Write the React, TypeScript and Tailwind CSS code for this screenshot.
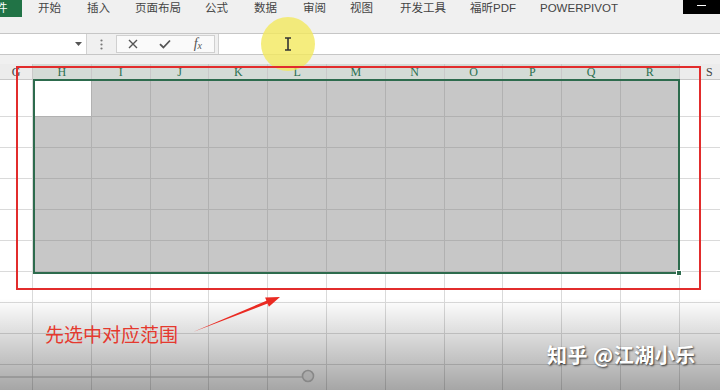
import { type ReactNode } from 'react'

const tabs = [
  { label: '开始', w: 'w-[49px]' },
  { label: '插入', w: 'w-[48px]' },
  { label: '页面布局', w: 'w-[70px]' },
  { label: '公式', w: 'w-[49px]' },
  { label: '数据', w: 'w-[49px]' },
  { label: '审阅', w: 'w-[47px]' },
  { label: '视图', w: 'w-[50px]' },
  { label: '开发工具', w: 'w-[70px]' },
  { label: '福昕PDF', w: 'w-[70px]' },
  { label: 'POWERPIVOT', w: 'w-[90px]' },
]

const cols = ['G', 'H', 'I', 'J', 'K', 'L', 'M', 'N', 'O', 'P', 'Q', 'R', 'S']
const rowCount = 10

function Ribbon() {
  return (
    <div className="h-[33px] bg-[#f0f0f0]">
      <div className="flex h-[17px] items-center">
        <div className="h-[17px] w-[22px] overflow-hidden bg-[#217346] text-[11.5px] leading-[17px] text-white">
          <span className="-ml-[4px]">件</span>
        </div>
        <div className="ml-[16px] flex text-[11.5px] leading-none text-[#444]">
          {tabs.map((t) => (
            <span key={t.label} className={`${t.w} shrink-0 whitespace-nowrap`}>
              {t.label}
            </span>
          ))}
        </div>
        <div className="ml-auto flex h-[14px] w-[37px] items-start self-start justify-center bg-black pt-[5px]">
          <div className="h-px w-[9px] bg-white" />
        </div>
      </div>
    </div>
  )
}

function FormulaBar() {
  return (
    <div className="flex h-[22px] border-y border-[#c6c6c6] bg-[#f0f0f0]">
      <div className="relative w-[87px] border-r border-[#d2d2d2] bg-white">
        <svg className="absolute left-[75px] top-[8px]" width="7" height="4" viewBox="0 0 7 4">
          <path d="M0 0h7L3.5 4z" fill="#555" />
        </svg>
      </div>
      <div className="flex w-[29px] items-center justify-center">
        <svg width="3" height="11" viewBox="0 0 3 11">
          <circle cx="1.5" cy="1.5" r="1.1" fill="#777" />
          <circle cx="1.5" cy="5.5" r="1.1" fill="#777" />
          <circle cx="1.5" cy="9.5" r="1.1" fill="#777" />
        </svg>
      </div>
      <div className="my-[1px] flex w-[99px] items-center border border-[#d0d0d0] bg-[#fafafa]">
        <div className="flex w-[33px] justify-center">
          <svg width="10" height="10" viewBox="0 0 10 10">
            <path d="M1 1l8 8M9 1L1 9" stroke="#555" strokeWidth="1.4" />
          </svg>
        </div>
        <div className="flex w-[33px] justify-center">
          <svg width="12" height="10" viewBox="0 0 12 10">
            <path d="M1 5.2l3.4 3.3L11 1.5" stroke="#555" strokeWidth="1.8" fill="none" />
          </svg>
        </div>
        <div className="flex w-[33px] items-end justify-center font-['Liberation_Serif',serif] text-[14px] leading-none italic text-[#555]">
          f<span className="text-[10px]">x</span>
        </div>
      </div>
      <div className="ml-[3px] flex-1 border-l border-[#d0d0d0] bg-white" />
    </div>
  )
}

function Sheet() {
  const cells: ReactNode[] = []
  cols.forEach((c, i) => {
    const sel = i >= 1 && i <= 11
    cells.push(
      <div
        key={`h-${c}`}
        className={`flex items-center justify-center border-r border-b border-[#c9c9c9] font-['Liberation_Serif',serif] text-[12px] leading-none ${
          sel ? 'bg-[#d4dbd6] text-[#2b7050]' : 'bg-[#ececec] text-[#444]'
        }`}
      >
        {c}
      </div>,
    )
  })
  for (let r = 0; r < rowCount; r++) {
    cols.forEach((c, i) => {
      const sel = i >= 1 && i <= 11 && r < 6
      const active = i === 1 && r === 0
      let cls = 'border-r border-b border-[#dadada] bg-white'
      if (sel && !active) cls = 'border-r border-b border-[#b1b1b1] bg-[#c7c7c7]'
      if (active) cls = 'border-r border-b border-[#b1b1b1] bg-white'
      cells.push(<div key={`${c}-${r}`} className={cls} />)
    })
  }
  return (
    <div className="grid grid-cols-[33px_repeat(11,58.8px)_60px] grid-rows-[16px_37px_repeat(9,31px)]">
      {cells}
    </div>
  )
}

export default function App() {
  return (
    <div className="relative h-[390px] w-[720px] overflow-hidden bg-white font-['Liberation_Sans','Noto_Sans_CJK_SC',sans-serif]">
      <Ribbon />
      <FormulaBar />
      <div className="h-[9px] bg-[#f0f0f0]" />
      <Sheet />

      {/* cursor highlight */}
      <div className="absolute left-[261px] top-[17px] h-[54px] w-[54px] rounded-full bg-[#f3e95e]/80 blur-[0.5px]" />
      <svg className="absolute left-[284px] top-[37px]" width="8" height="14" viewBox="0 0 8 14">
        <path d="M1 1h6M4 1v12M1 13h6" stroke="#333" strokeWidth="1.6" fill="none" />
      </svg>

      {/* selection */}
      <div className="absolute left-[33px] top-[79px] h-[195px] w-[647px] border-2 border-[#2d6b4d]" />
      <div className="absolute left-[676px] top-[270px] h-[6px] w-[6px] border border-white bg-[#2d6b4d]" />

      {/* red annotation box */}
      <div className="absolute left-[16px] top-[66px] h-[224px] w-[685px] border-2 border-[#e22c2c]" />

      {/* bottom video shading */}
      <div className="absolute inset-x-0 top-[298px] bottom-0 bg-linear-to-b from-black/0 to-black/35" />

      <div className="absolute left-[45px] top-[324px] font-['Noto_Sans_CJK_SC',sans-serif] text-[19px] leading-none text-[#e5392e]">
        先选中对应范围
      </div>
      <svg className="absolute left-0 top-0" width="720" height="390" viewBox="0 0 720 390">
        <polygon
          points="193,332 267.6,303.6 268.9,306.8 280,297 265.1,297.6 266.4,300.8"
          fill="#ea2a22"
        />
        <line x1="0" y1="377" x2="302" y2="377" stroke="#8a8a8a" strokeOpacity="0.8" strokeWidth="1.5" />
        <circle cx="308" cy="376" r="5.5" fill="#9a9a9a" fillOpacity="0.4" stroke="#888" strokeWidth="1.6" />
      </svg>

      <div className="absolute left-[547px] top-[345px] font-['Noto_Sans_CJK_SC',sans-serif] text-[20px] font-bold leading-none tracking-[0.5px] text-white [text-shadow:1px_1px_2px_rgba(0,0,0,0.75)]">
        知乎 @江湖小乐
      </div>
    </div>
  )
}
